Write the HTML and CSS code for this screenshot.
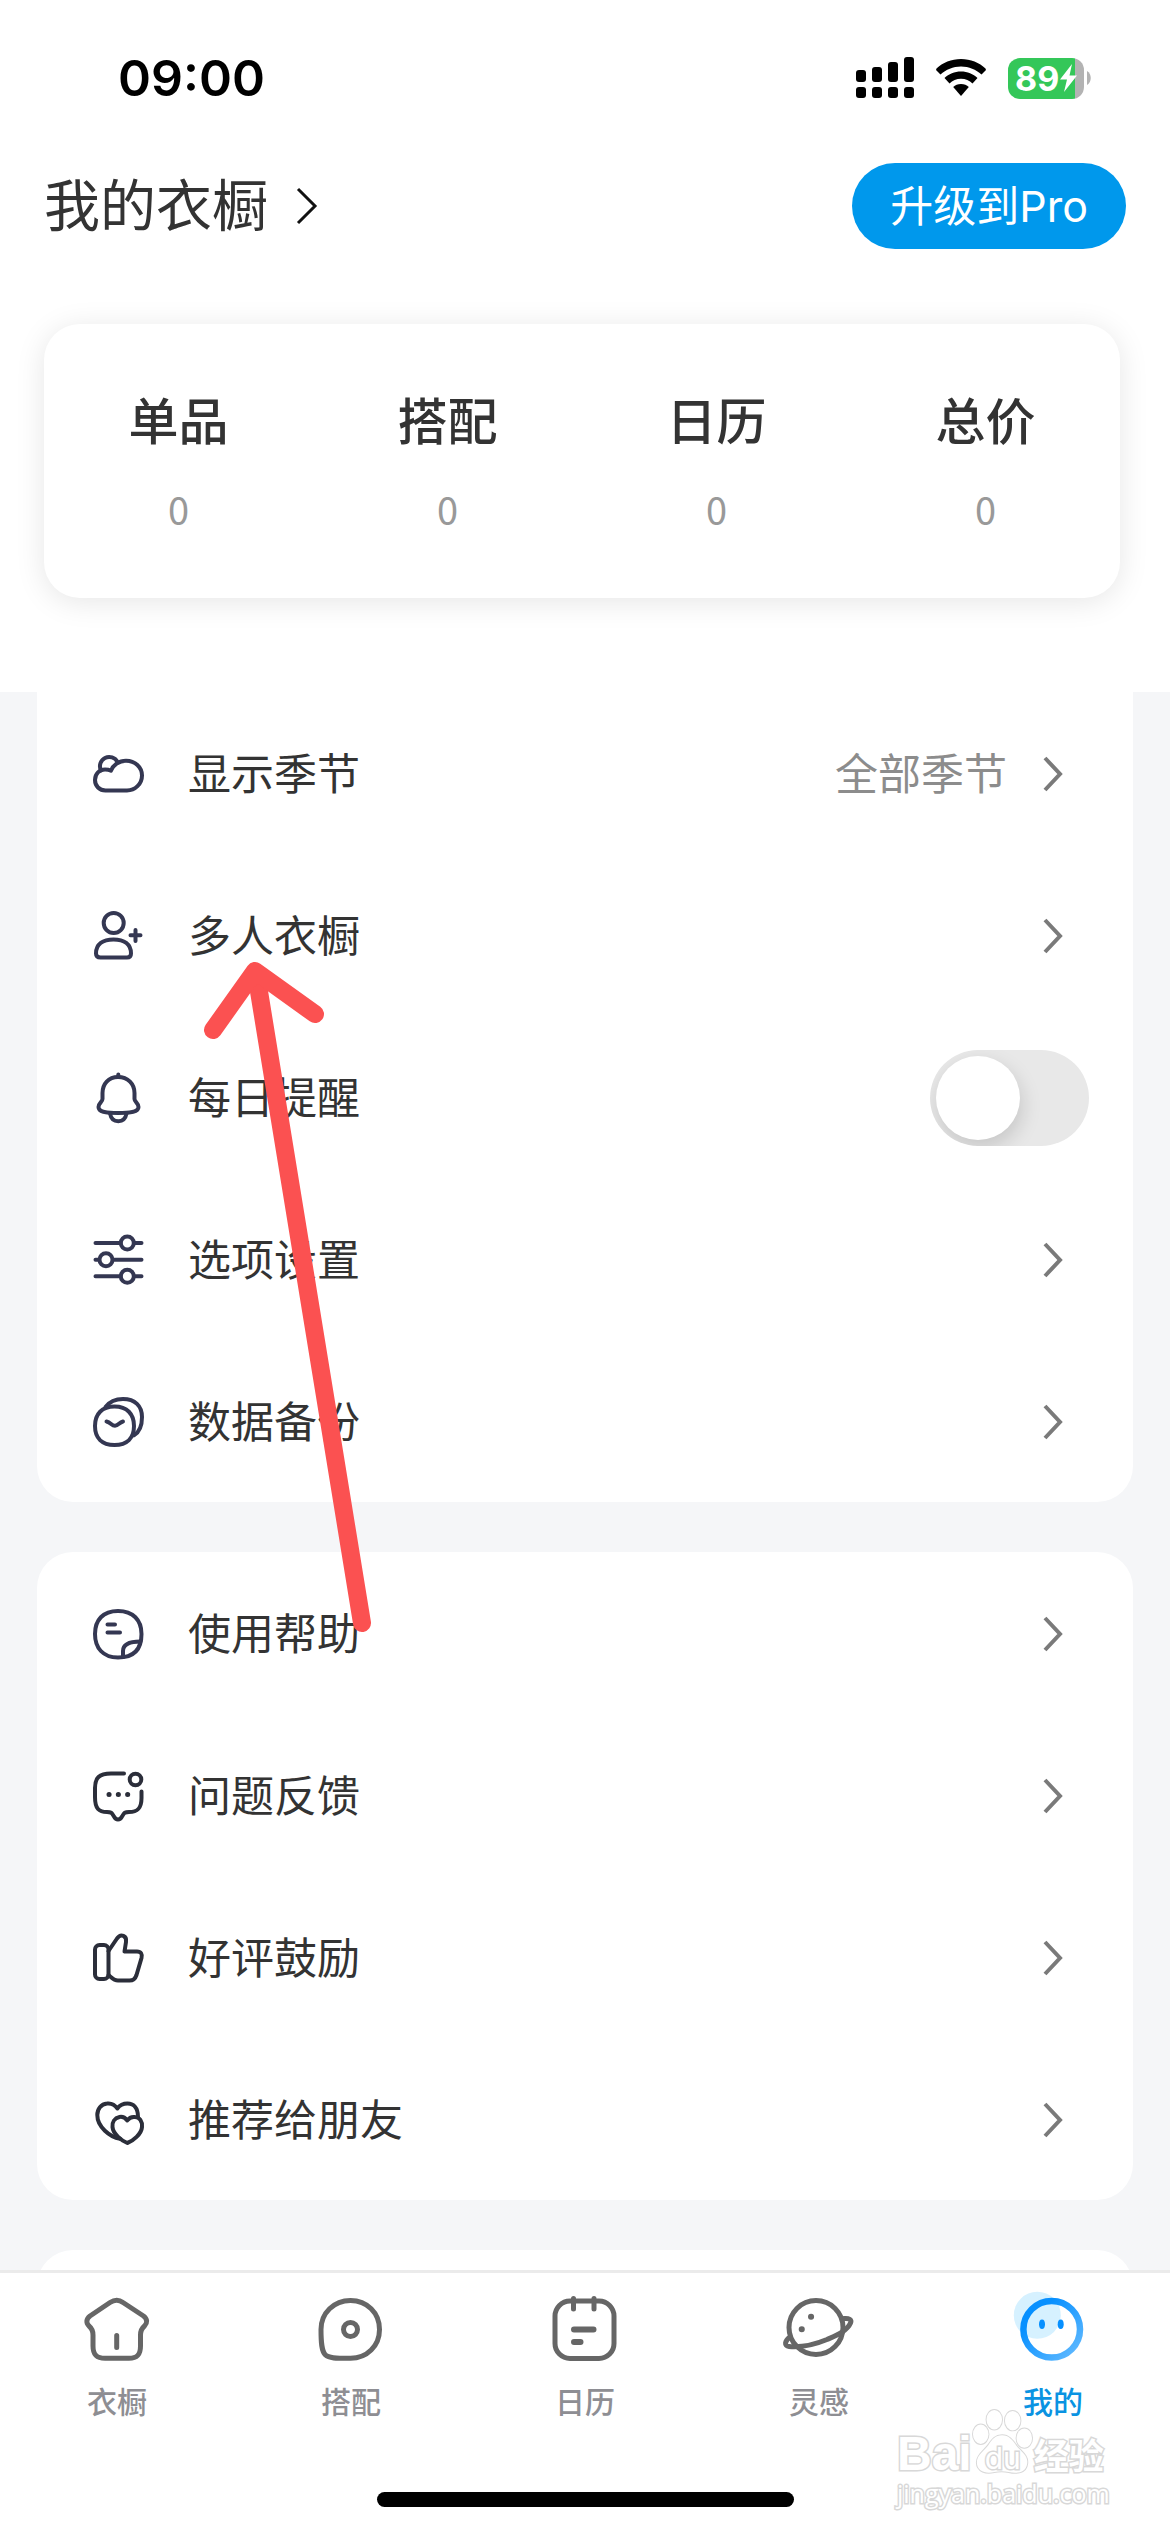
FILE: index.html
```html
<!DOCTYPE html>
<html lang="zh-CN">
  <head>
    <meta charset="UTF-8" />
    <meta name="viewport" content="width=device-width, initial-scale=1.0" />
    <title>我的衣橱</title>
    <link rel="stylesheet" href="styles.css">
  </head>
  <body>
    <div class="page">
      <header class="header">
        <div class="status-bar">
          <span class="time">09:00</span>
          <div class="status-icons">
            <svg class="signal" viewBox="0 0 58 42">
              <rect x="0" y="13" width="10" height="12" rx="3" />
              <rect x="16" y="10" width="10" height="15" rx="3" />
              <rect x="32" y="5" width="10" height="20" rx="3" />
              <rect x="48" y="0" width="10" height="25" rx="3" />
              <rect x="0" y="30" width="10" height="11" rx="3" />
              <rect x="16" y="30" width="10" height="11" rx="3" />
              <rect x="32" y="30" width="10" height="11" rx="3" />
              <rect x="48" y="30" width="10" height="11" rx="3" />
            </svg>
            <svg class="wifi" viewBox="0 0 50 38">
              <path d="M25 0C15.500 0 6.500 3.700 0.500 9.500L0 11L4.500 15.500C10 10.500 17 7.500 25 7.500C33 7.500 40 10.500 45.500 15.500L50 11L49.500 9.500C43.500 3.700 34.500 0 25 0Z" />
              <path d="M25 12.500C18.500 12.500 12.800 15 8.500 19L13.500 24.500C16.500 21.500 20.500 19.800 25 19.800C29.500 19.800 33.500 21.500 36.500 24.500L41.500 19C37.200 15 31.500 12.500 25 12.500Z" />
              <path d="M25 25C21.800 25 19.200 26.200 17.200 28L25 37L32.800 28C30.800 26.200 28.200 25 25 25Z" />
            </svg>
            <div class="battery">
              <div class="battery-body">
                89
                <svg class="bolt" viewBox="0 0 18 28">
                  <path d="M13 0L1 15.500H8L5 28L18 11.500H10.500Z" />
                </svg>
              </div>
              <svg class="battery-cap" viewBox="0 0 4 14"><path d="M0 0C5 3 5 11 0 14Z" /></svg>
            </div>
          </div>
        </div>

        <div class="title-bar">
          <a class="title" href="#">
            我的衣橱
            <svg class="title-arrow" viewBox="0 0 22 38"><path d="M2 2L19 19L2 36" /></svg>
          </a>
          <button class="pro-button">升级到Pro</button>
        </div>

        <div class="stats">
          <div class="stat"><b>单品</b><span>0</span></div>
          <div class="stat"><b>搭配</b><span>0</span></div>
          <div class="stat"><b>日历</b><span>0</span></div>
          <div class="stat"><b>总价</b><span>0</span></div>
        </div>
      </header>

      <main class="content">
        <section class="group group-first">
          <a class="row" href="#">
            <svg class="icon" viewBox="0 0 50 50">
              <path d="M12.500 41.500C6.500 41.500 2 37 2 31C2 24.500 6.500 20.500 12 20.500C14.500 20.500 16.500 21 18 21.700C20 16 26 11.700 33 11.700C42 11.700 49 18 49 26.500C49 35 42 41.500 34 41.500Z" />
              <path d="M8 21.500A9 9 0 1 1 24.500 13" />
            </svg>
            <span class="label">显示季节</span>
            <span class="value">全部季节</span>
            <svg class="arrow" viewBox="0 0 60 50"><path d="M16 9L31 25L16 41" /></svg>
          </a>
          <a class="row" href="#">
            <svg class="icon" viewBox="0 0 50 50">
              <circle cx="20.700" cy="12" r="10" />
              <path d="M7.500 46.500H34C37 46.500 38 45 38 42.500C38 33 31 28.500 20.500 28.500C10 28.500 3 33 3 42.500C3 45 4.500 46.500 7.500 46.500Z" />
              <path d="M37.500 24.300H47.500M42.500 19V30" />
            </svg>
            <span class="label">多人衣橱</span>
            <svg class="arrow" viewBox="0 0 60 50"><path d="M16 9L31 25L16 41" /></svg>
          </a>
          <label class="row">
            <svg class="icon" viewBox="0 0 50 50">
              <path d="M25 4C15.500 4 9.500 11 9.500 20V26C9.500 29 5.500 30 5.500 34C5.500 39 12 40 25 40C38 40 45.500 39 45.500 34C45.500 30 41.500 29 41.500 26V20C41.500 11 35 4 25 4Z" />
              <path d="M25.300 1.500V4M17 40.500C18 46 21 48.300 25.300 48.300C29.500 48.300 32.500 46 33.500 40.500" />
            </svg>
            <span class="label">每日提醒</span>
            <input class="switch" type="checkbox" />
          </label>
          <a class="row" href="#">
            <svg class="icon" viewBox="0 0 50 50">
              <path d="M2.500 8H27.500M41.500 8H48.500M2.500 24.700H6M20 24.700H48.500M2.500 41.300H27.500M41.500 41.300H48.500" />
              <circle cx="34.300" cy="8" r="6.500" />
              <circle cx="13" cy="24.700" r="6.500" />
              <circle cx="34.300" cy="41.300" r="6.500" />
            </svg>
            <span class="label">选项设置</span>
            <svg class="arrow" viewBox="0 0 60 50"><path d="M16 9L31 25L16 41" /></svg>
          </a>
          <a class="row" href="#">
            <svg class="icon" viewBox="0 0 50 50">
              <path d="M21.500 9.500C34 9.500 41 17 41 29C41 41 34 48 21.500 48C9 48 2 41 2 29C2 17 9 9.500 21.500 9.500Z" />
              <path d="M12.500 10C17 4 24 2 30 2C42 2 49 9 49 20C49 28 46.500 35 41 38.300" />
              <path d="M13.500 24.500C18 25.500 18.500 28.700 22 28.700C25.500 28.700 26 25.500 30 24.500" />
            </svg>
            <span class="label">数据备份</span>
            <svg class="arrow" viewBox="0 0 60 50"><path d="M16 9L31 25L16 41" /></svg>
          </a>
        </section>

        <section class="group">
          <a class="row" href="#">
            <svg class="icon" viewBox="0 0 50 50">
              <path d="M25 2C10 2 2 11 2 25C2 39 10 48.500 25 48.500C41 48.500 48.500 40 48.500 25C48.500 11 40 2 25 2Z" />
              <path d="M30 48V42C30 36 35 32.500 47.500 32.500M14.500 15.500H22M14.500 23.500H27" />
            </svg>
            <span class="label">使用帮助</span>
            <svg class="arrow" viewBox="0 0 60 50"><path d="M16 9L31 25L16 41" /></svg>
          </a>
          <a class="row" href="#">
            <svg class="icon icon-dark" viewBox="0 0 50 50">
              <path d="M31 2.500H18C6 2.500 2 7 2 17V26C2 38 6 41 14 41C19 41 19 42.500 21 45.500C23 49.500 27 49.500 29 45.500C31 42.500 31 41 36 41C45 41 48.500 37 48.500 27V20.500" />
              <circle cx="42.500" cy="8.500" r="5.800" />
              <path class="dots" d="M16 23.500H16.100M25.300 23.500H25.400M34.600 23.500H34.700" />
            </svg>
            <span class="label">问题反馈</span>
            <svg class="arrow" viewBox="0 0 60 50"><path d="M16 9L31 25L16 41" /></svg>
          </a>
          <a class="row" href="#">
            <svg class="icon icon-dark" viewBox="0 0 50 50">
              <rect x="2" y="12" width="13.500" height="34" rx="4.500" />
              <path d="M15.500 18L24 5.500C28 0 34 3 33 9L31.500 18.500H44C48 18.500 49.500 21 48.500 25L43.500 42C42 46.500 40 47.500 36.500 47.500H25C21 47.500 19 45 15.500 42" />
            </svg>
            <span class="label">好评鼓励</span>
            <svg class="arrow" viewBox="0 0 60 50"><path d="M16 9L31 25L16 41" /></svg>
          </a>
          <a class="row" href="#">
            <svg class="icon icon-dark" viewBox="0 0 50 50">
              <path d="M45 22C45 12 40 8.500 34.500 8.500C30 8.500 26.500 10.500 24.300 13.500C22 10 18 8 14 8.500C8 9 4.300 14 4.300 20C4.300 32 17 42 27 43.800" />
              <path d="M34.300 25.500C32 22.500 29 21.500 26.500 22C21.500 23 19 27 19.500 32C20 39 29 46 34.300 48C40 46 48.500 39 49 32C49.500 26.500 46.500 22 42 22C38.500 21.500 36 23 34.300 25.500Z" />
            </svg>
            <span class="label">推荐给朋友</span>
            <svg class="arrow" viewBox="0 0 60 50"><path d="M16 9L31 25L16 41" /></svg>
          </a>
        </section>

        <section class="group group-more"></section>
      </main>

      <nav class="tab-bar">
        <div class="tabs">
          <a class="tab" href="#">
            <svg class="tab-icon" viewBox="0 0 80 72">
              <path d="M33 12.500L13 26C9 29 9 33 12 36C15 38.500 16 41 16 45V56C16 65 20 68.300 28 68.300H52C60 68.300 63.500 65 63.500 56V45C63.500 41 64.500 38.500 67.500 36C70.500 33 70.500 29 66.500 26L46 12.500C42 9.500 37.500 9.500 33 12.500ZM39.700 45.500V57.500" />
            </svg>
            衣橱
          </a>
          <a class="tab" href="#">
            <svg class="tab-icon" viewBox="0 0 80 72">
              <path d="M39.500 10.500C56 10.500 68.500 23 68.500 39.500C68.500 56 56 68.300 39.500 68.300C26 68.300 18 68.500 14.500 65C10.500 61 10 53 10 39.500C10 23 23 10.500 39.500 10.500Z" />
              <circle cx="39.500" cy="39.500" r="7" />
            </svg>
            搭配
          </a>
          <a class="tab" href="#">
            <svg class="tab-icon" viewBox="0 0 80 72">
              <rect x="10" y="11" width="59" height="57.500" rx="15" />
              <path d="M28.500 8.500V19M49 8.500V19" />
              <path class="lines" d="M29 39.500H48.500M29 52H35.500" />
            </svg>
            日历
          </a>
          <a class="tab" href="#">
            <svg class="tab-icon" viewBox="0 0 80 72">
              <circle cx="37" cy="37.500" r="27" />
              <path d="M65 28.500C70 28 73 29.500 71.500 33C68 41 58 45 48 49.500C36 54.500 22 57.500 10 56.500C5 56 5.500 51 11 47" />
              <path class="lines" d="M32 26.700H32.100M22.700 39.300H22.800" />
            </svg>
            灵感
          </a>
          <a class="tab active" href="#">
            <svg class="tab-icon face" viewBox="0 0 80 72">
              <defs>
                <linearGradient id="ring" x1="0" y1="0" x2="1" y2="1">
                  <stop offset="0.250" stop-color="#0790ff" />
                  <stop offset="1" stop-color="#66bcff" />
                </linearGradient>
              </defs>
              <circle cx="24.300" cy="25.300" r="23.500" fill="#d6f1ff" />
              <circle cx="38.700" cy="39.300" r="28.300" fill="none" stroke="url(#ring)" stroke-width="6.500" />
              <ellipse cx="29" cy="34.300" rx="3" ry="4.700" fill="#0790ff" />
              <ellipse cx="47.700" cy="34.300" rx="3" ry="4.700" fill="#0790ff" />
            </svg>
            我的
          </a>
        </div>
        <div class="home-indicator"></div>
      </nav>

      <!-- 指向“多人衣橱”的箭头 -->
      <svg class="pointer" viewBox="0 0 130 680">
        <path d="M51 14L157 664" />
        <path d="M8 71L50 12L110 55" />
      </svg>

      <div class="watermark">
        <div class="watermark-logo">
          <span class="wm-bai">Bai</span>
          <span class="wm-paw">
            <svg viewBox="0 0 64 68">
              <ellipse cx="9" cy="26" rx="8" ry="10" />
              <ellipse cx="23" cy="11" rx="8" ry="10" />
              <ellipse cx="42" cy="12" rx="8" ry="10" />
              <ellipse cx="54" cy="30" rx="8" ry="10" />
              <path d="M31 27C38 27 42 32 46 38C51 44 58 48 57 56C56 66 46 67 38 65C33 64 28 64 23 65C15 67 5 65 5 55C5 47 13 43 17 37C21 31 24 27 31 27Z" />
            </svg>
            <span class="wm-du">du</span>
          </span>
          <span class="wm-jingyan">经验</span>
        </div>
        <div class="wm-url">jingyan.baidu.com</div>
      </div>
    </div>
  </body>
</html>
```
FILE: styles.css
```css
* {
  box-sizing: border-box;
}
body {
  margin: 0;
  font-family: Inter, 'Noto Sans CJK SC', sans-serif;
  color: #333;
  background: #f5f6f8;
}
a {
  color: inherit;
  text-decoration: none;
}
svg {
  display: block;
  flex-shrink: 0;
}
.page {
  position: relative;
  display: flex;
  flex-direction: column;
  height: 100vh;
  overflow: hidden;
}

/* 顶部 */
.header {
  flex-shrink: 0;
  padding-bottom: 94px;
  background: #fff;
}
.status-bar {
  display: flex;
  align-items: center;
  justify-content: space-between;
  height: 156px;
  padding: 0 79px 0 118px;
  color: #000;
}
.time {
  font-size: 50px;
  font-weight: 600;
}
.status-icons {
  display: flex;
  align-items: center;
  gap: 22px;
}
.signal {
  width: 58px;
  height: 42px;
}
.wifi {
  width: 50px;
  height: 38px;
}
.battery {
  display: flex;
  align-items: center;
  gap: 3px;
}
.battery-body {
  display: flex;
  align-items: center;
  width: 76px;
  height: 41px;
  padding-left: 7px;
  border-radius: 12px;
  background: linear-gradient(90deg, #34c759 67px, #b3b3b3 67px);
  color: #fff;
  font-size: 34px;
  font-weight: 700;
}
.bolt {
  width: 18px;
  height: 28px;
  fill: #fff;
}
.battery-cap {
  width: 4px;
  height: 14px;
  fill: #b3b3b3;
}
.title-bar {
  display: flex;
  align-items: center;
  justify-content: space-between;
  height: 100px;
  padding: 0 44px;
}
.title {
  display: flex;
  align-items: center;
  gap: 28px;
  font-size: 56px;
  line-height: 80px;
}
.title-arrow {
  width: 22px;
  height: 38px;
  fill: none;
  stroke: #111;
  stroke-width: 3;
}
.pro-button {
  height: 86px;
  padding: 0 38px;
  border: none;
  border-radius: 43px;
  background: #0098ec;
  color: #fff;
  font-family: inherit;
  font-size: 43px;
  line-height: 60px;
}
.stats {
  display: flex;
  margin: 68px 50px 0 44px;
  padding: 66px 0 65px;
  border-radius: 36px;
  background: #fff;
  box-shadow: 0 4px 30px rgba(0, 0, 0, 0.1);
}
.stat {
  flex: 1;
  display: flex;
  flex-direction: column;
  align-items: center;
  gap: 31px;
}
.stat b {
  font-size: 50px;
  font-weight: 500;
  line-height: 64px;
}
.stat span {
  color: #999;
  font-family: 'Noto Sans CJK SC', sans-serif;
  font-size: 38px;
  line-height: 48px;
}

/* 列表 */
.content {
  flex: 1;
  display: flex;
  flex-direction: column;
  gap: 50px;
  min-height: 0;
  padding: 0 37px;
  overflow: hidden;
}
.group {
  flex-shrink: 0;
  border-radius: 36px;
  background: #fff;
}
.group-first {
  border-radius: 0 0 36px 36px;
}
.group-more {
  height: 162px;
}
.row {
  display: flex;
  align-items: center;
  height: 162px;
  padding: 2px 44px 0 56px;
  font-size: 43px;
  line-height: 60px;
}
.icon {
  width: 50px;
  height: 50px;
  margin-right: 45px;
  overflow: visible;
  fill: none;
  stroke: #343752;
  stroke-width: 4;
  stroke-linecap: round;
  stroke-linejoin: round;
}
.icon-dark {
  stroke: #2b2e3a;
}
.icon .dots {
  stroke-width: 5;
}
.label {
  flex: 1;
}
.value {
  margin-right: 22px;
  color: #8c8c8c;
}
.arrow {
  width: 60px;
  height: 50px;
  fill: none;
  stroke: #7a7a7a;
  stroke-width: 4;
}
.switch {
  appearance: none;
  width: 159px;
  height: 96px;
  margin: 0;
  padding: 6px;
  border-radius: 48px;
  background: #e8e8e8;
  overflow: hidden;
}
.switch::before {
  content: '';
  display: block;
  width: 84px;
  height: 84px;
  border-radius: 50%;
  background: #fff;
  box-shadow: 2px 8px 20px rgba(0, 0, 0, 0.15);
}
.switch:checked {
  background: #0098ec;
}
.switch:checked::before {
  margin-left: 63px;
}

/* 底部导航 */
.tab-bar {
  display: flex;
  flex-shrink: 0;
  flex-direction: column;
  align-items: center;
  justify-content: space-between;
  height: 262px;
  padding: 17px 0 25px;
  border-top: 3px solid #ebebeb;
  background: #fff;
}
.tabs {
  display: flex;
  width: 100%;
}
.tab {
  flex: 1;
  display: flex;
  flex-direction: column;
  align-items: center;
  gap: 20px;
  color: #8e8e93;
  font-size: 30px;
  font-weight: 500;
  line-height: 40px;
}
.tab.active {
  color: #0a93e2;
}
.tab-icon {
  width: 80px;
  height: 72px;
  fill: none;
  stroke: #666;
  stroke-width: 5;
  stroke-linecap: round;
  stroke-linejoin: round;
}
.tab-icon .lines {
  stroke-width: 6;
}
.face {
  stroke: none;
}
.home-indicator {
  width: 417px;
  height: 15px;
  border-radius: 8px;
  background: #000;
}

/* 浮层 */
.pointer {
  position: absolute;
  top: 959px;
  left: 205px;
  width: 130px;
  height: 680px;
  overflow: visible;
  fill: none;
  stroke: #fb5151;
  stroke-width: 18;
  stroke-linecap: round;
  stroke-linejoin: round;
  pointer-events: none;
}
.watermark {
  position: absolute;
  right: 60px;
  bottom: 22px;
  width: 213px;
  color: #fff;
  -webkit-text-stroke: 3px #d8d8d8;
  paint-order: stroke fill;
  pointer-events: none;
}
.watermark-logo {
  display: flex;
  align-items: flex-end;
}
.wm-bai {
  font-family: 'Liberation Sans', sans-serif;
  font-size: 48px;
  font-weight: 700;
  line-height: 44px;
}
.wm-paw {
  position: relative;
}
.wm-paw svg {
  width: 62px;
  height: 68px;
  overflow: visible;
  fill: #fff;
  stroke: #d8d8d8;
  stroke-width: 2;
}
.wm-du {
  position: absolute;
  right: 0;
  bottom: 0;
  left: 0;
  font-size: 30px;
  line-height: 36px;
  text-align: center;
}
.wm-jingyan {
  font-size: 35px;
  font-weight: 700;
  line-height: 40px;
}
.wm-url {
  font-family: 'Open Sans', sans-serif;
  font-size: 25px;
  line-height: 34px;
}
```
